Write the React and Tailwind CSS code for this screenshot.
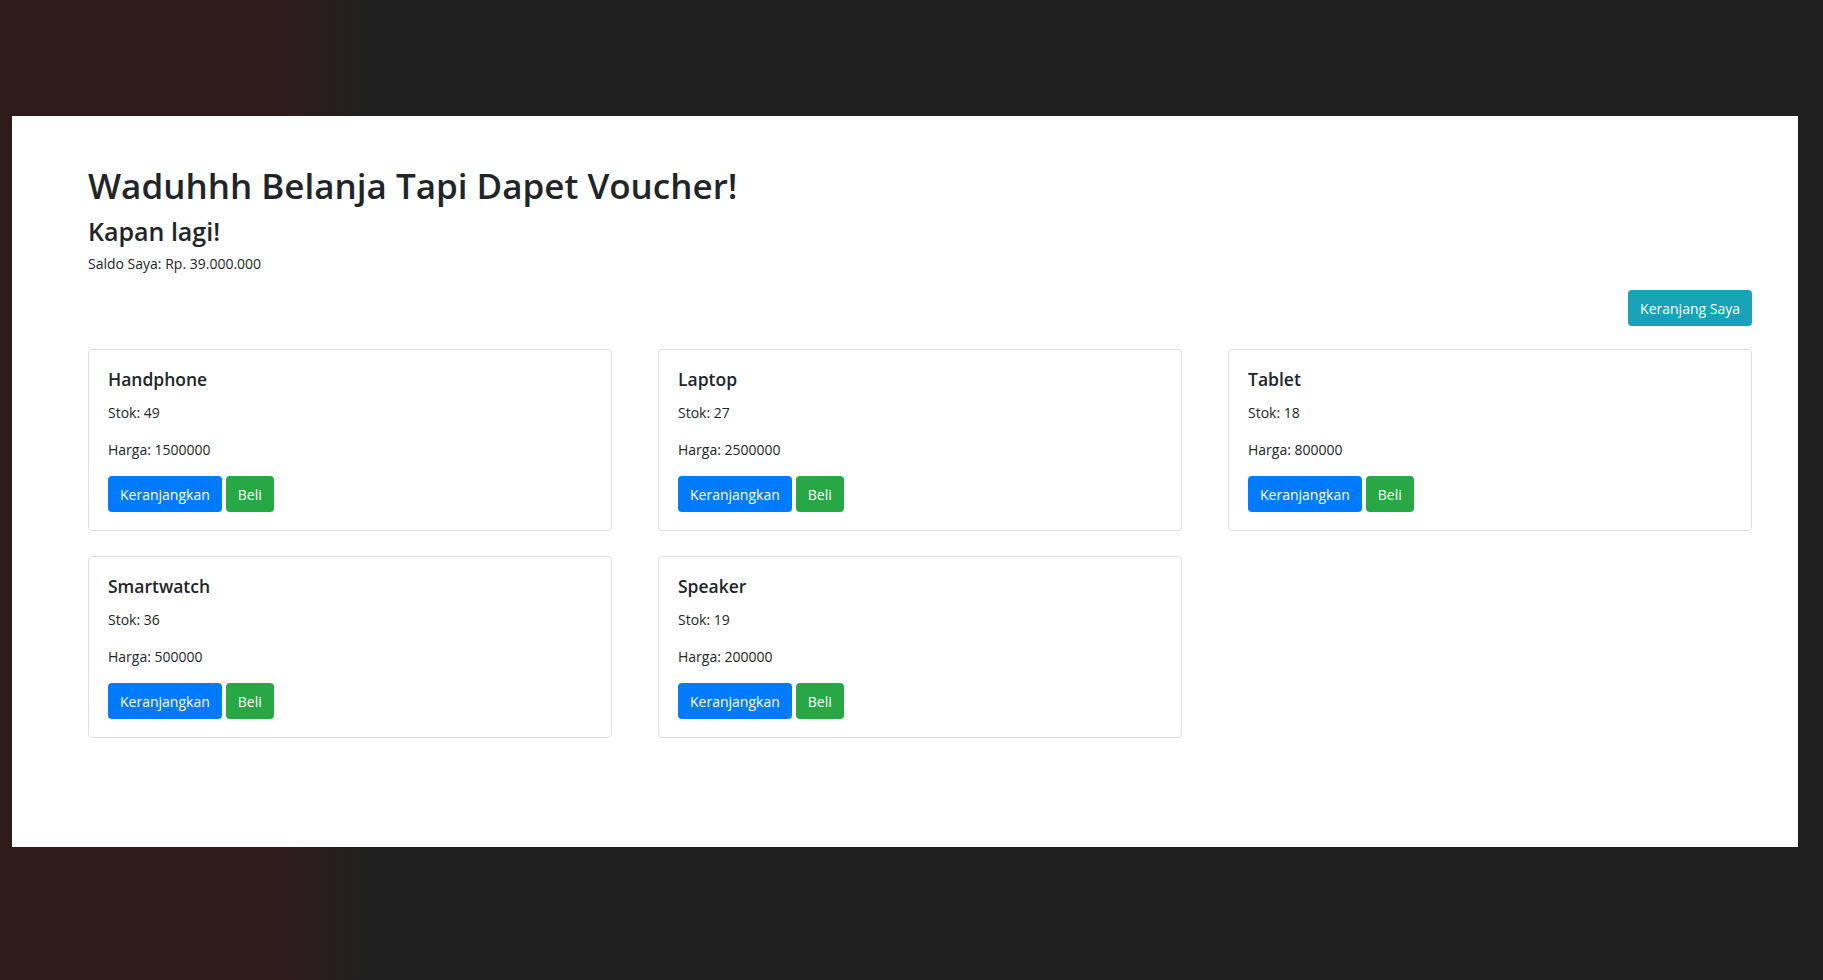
import React from 'react';

const products = [
    { name: 'Handphone', stok: 49, harga: 1500000 },
    { name: 'Laptop', stok: 27, harga: 2500000 },
    { name: 'Tablet', stok: 18, harga: 800000 },
    { name: 'Smartwatch', stok: 36, harga: 500000 },
    { name: 'Speaker', stok: 19, harga: 200000 },
];

function ProductCard({ product }) {
    return (
        <div className="border border-[#dfdfdf] rounded-[4px] bg-white px-[19px] pt-[17px] pb-[18px]">
            <h5 className="text-[17.5px] leading-[24px] font-semibold text-[#212529] mb-[10px]">{product.name}</h5>
            <p className="text-[14px] leading-[24px] text-[#212529] mb-[13px]">Stok: {product.stok}</p>
            <p className="text-[14px] leading-[24px] text-[#212529] mb-[14px]">Harga: {product.harga}</p>
            <div className="flex gap-[4px]">
                <button className="h-[36px] px-[12px] rounded-[4px] bg-[#007bff] text-white text-[14px]">Keranjangkan</button>
                <button className="h-[36px] px-[12px] rounded-[4px] bg-[#28a745] text-white text-[14px]">Beli</button>
            </div>
        </div>
    );
}

export default function App() {
    return (
        <div
            className="w-full h-[980px] pt-[116px] pl-[12px] pr-[25px] bg-[linear-gradient(to_right,#2e1b1a_280px,#202020_370px)]"
            style={{ fontFamily: '"Open Sans", sans-serif' }}
        >
            <div className="h-[731px] bg-white pl-[76px] pr-[46px] pt-[48px]">
                <h1 className="text-[35px] leading-[44px] font-semibold text-[#212529]">Waduhhh Belanja Tapi Dapet Voucher!</h1>
                <h3 className="text-[25px] leading-[30px] font-semibold text-[#212529] mt-[8px]">Kapan lagi!</h3>
                <p className="text-[14px] leading-[20px] text-[#212529] mt-[8px]">Saldo Saya: Rp. 39.000.000</p>
                <div className="flex justify-end mt-[16px]">
                    <button className="h-[36px] px-[12px] rounded-[4px] bg-[#17a2b8] text-white text-[14px]">Keranjang Saya</button>
                </div>
                <div className="grid grid-cols-3 gap-x-[46px] gap-y-[25px] mt-[23px]">
                    {products.map(p => (
                        <ProductCard key={p.name} product={p} />
                    ))}
                </div>
            </div>
        </div>
    );
}
